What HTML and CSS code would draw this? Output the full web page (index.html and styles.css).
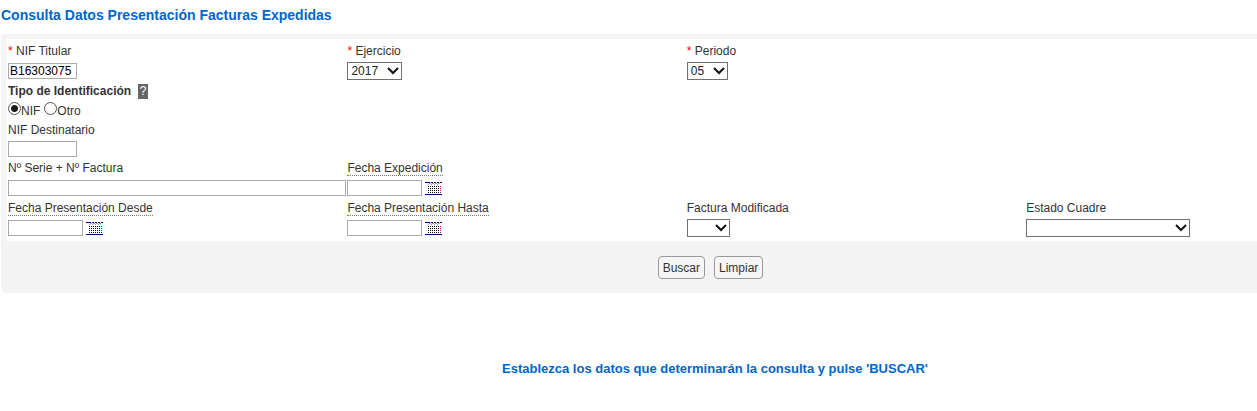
FILE: index.html
```html
<!DOCTYPE html>
<html lang="es">
  <head>
    <meta charset="UTF-8" />
    <meta name="viewport" content="width=device-width, initial-scale=1.0" />
    <title>Consulta Datos Presentación Facturas Expedidas</title>
    <link rel="stylesheet" href="styles.css">
  </head>

  <body>
    <svg class="defs" width="0" height="0">
      <symbol id="calendar" viewBox="0 0 17 13" shape-rendering="crispEdges">
        <path d="M0 .5h5M6 .5h2M9 .5h2M12 .5h2M15 .5h2M0 12.5h17" stroke="#000060" />
        <path d="M4 1.5h2M7 1.5h2M10 1.5h2M13 1.5h2M3 2.5h1M6 2.5h1M9 2.5h1M12 2.5h1" stroke="#a0a0a0" />
        <path d="M3 4.5h12M3 6.5h12M3 8.5h12M3 10.5h12" stroke="#000" stroke-dasharray="1 1" />
        <path d="M15.500 4v8" stroke="#d00040" stroke-dasharray="1 1" />
      </symbol>
    </svg>
    <div class="page">
      <h1>Consulta Datos Presentación Facturas Expedidas</h1>
      <form class="panel">
        <div class="fields">
          <div class="row">
            <div class="field">
              <label for="titular"><span class="required">*</span> NIF Titular</label>
              <div class="control"><input id="titular" class="nif" type="text" value="B16303075" /></div>
            </div>
            <div class="field">
              <label for="ejercicio"><span class="required">*</span> Ejercicio</label>
              <div class="control"><select id="ejercicio" class="year"><option>2017</option></select></div>
            </div>
            <div class="field">
              <label for="periodo"><span class="required">*</span> Periodo</label>
              <div class="control"><select id="periodo" class="period"><option>05</option></select></div>
            </div>
          </div>
          <div class="row" role="radiogroup" aria-labelledby="tipo">
            <div class="field">
              <div class="legend"><strong id="tipo">Tipo de Identificación</strong><button type="button" class="help">?</button></div>
              <div class="control radios">
                <input id="tipo-nif" type="radio" name="tipo" checked /><label for="tipo-nif">NIF</label>
                <input id="tipo-otro" type="radio" name="tipo" /><label for="tipo-otro">Otro</label>
              </div>
            </div>
          </div>
          <div class="row">
            <div class="field">
              <label for="destinatario">NIF Destinatario</label>
              <div class="control short"><input id="destinatario" class="nif" type="text" /></div>
            </div>
          </div>
          <div class="row">
            <div class="field">
              <label for="factura">Nº Serie + Nº Factura</label>
              <div class="control"><input id="factura" class="wide" type="text" /></div>
            </div>
            <div class="field">
              <label for="expedicion"><abbr title="dd-mm-aaaa">Fecha Expedición</abbr></label>
              <div class="control"><input id="expedicion" class="date" type="text" /><button type="button" class="picker" aria-label="Calendario"><svg><use href="#calendar" /></svg></button></div>
            </div>
          </div>
          <div class="row">
            <div class="field">
              <label for="desde"><abbr title="dd-mm-aaaa">Fecha Presentación Desde</abbr></label>
              <div class="control"><input id="desde" class="date" type="text" /><button type="button" class="picker" aria-label="Calendario"><svg><use href="#calendar" /></svg></button></div>
            </div>
            <div class="field">
              <label for="hasta"><abbr title="dd-mm-aaaa">Fecha Presentación Hasta</abbr></label>
              <div class="control"><input id="hasta" class="date" type="text" /><button type="button" class="picker" aria-label="Calendario"><svg><use href="#calendar" /></svg></button></div>
            </div>
            <div class="field">
              <label for="modificada">Factura Modificada</label>
              <div class="control"><select id="modificada" class="modified"><option></option></select></div>
            </div>
            <div class="field">
              <label for="estado">Estado Cuadre</label>
              <div class="control"><select id="estado" class="state"><option></option></select></div>
            </div>
          </div>
        </div>
        <div class="actions">
          <button type="submit">Buscar</button>
          <button type="reset">Limpiar</button>
        </div>
      </form>
      <p class="message">Establezca los datos que determinarán la consulta y pulse 'BUSCAR'</p>
    </div>
  </body>
</html>
```

FILE: styles.css
```css
* {
  box-sizing: border-box;
}

html {
  overflow: hidden;
}

body {
  margin: 0;
  background: #fff;
  color: #333;
  font: 12px/20px "Liberation Sans", Arial, sans-serif;
}

.defs {
  position: absolute;
}

/* four columns of 27% make the form wider than the window */
.page {
  width: 114%;
  padding: 5px 4px 0 1px;
}

h1 {
  margin: 0 0 9px;
  font-size: 14px;
  line-height: 20px;
  color: #0066cc;
}

.panel {
  padding: 5px 5px 0;
  background: #f4f4f4;
  border-radius: 4px;
}

.fields {
  padding: 2px 2px 3px;
  background: #fff;
}

.row {
  display: grid;
  grid-template-columns: repeat(4, 27vw);
}

label,
.legend {
  display: block;
}

.required {
  color: #f00;
}

abbr {
  display: inline-block;
  line-height: 14px;
  text-decoration: none;
  border-bottom: 1px dotted #777;
}

.control {
  display: flex;
  align-items: center;
  height: 20px;
}

.control.short {
  height: 18px;
}

input,
select,
button {
  font: inherit;
}

input[type="text"] {
  height: 16px;
  padding: 0 1px;
  border: 1px solid #ababab;
  border-radius: 0;
  background: #fff;
  color: #000;
  line-height: 14px;
}

input.nif {
  width: 69px;
}

input.date {
  width: 75px;
}

input.wide {
  width: calc(100% - 1px);
}

select {
  appearance: none;
  height: 18px;
  padding: 0 16px 0 3px;
  border: 1px solid #707070;
  border-radius: 0;
  background: #fff url("data:image/svg+xml,%3Csvg xmlns='http://www.w3.org/2000/svg' width='12' height='8'%3E%3Cpath d='M1 1l5 5 5-5' fill='none' stroke='%23111' stroke-width='2'/%3E%3C/svg%3E") no-repeat right 2px center;
  color: #222;
  line-height: 16px;
}

.year {
  width: 55px;
}

.period {
  width: 41px;
}

.modified {
  width: 43px;
}

.state {
  width: 164px;
}

.legend {
  display: flex;
  align-items: center;
  gap: 7px;
}

.help {
  width: 10px;
  height: 15px;
  padding: 0;
  border: 0;
  background: #666;
  color: #fff;
  line-height: 15px;
}

.radios {
  height: 19px;
}

.radios input {
  appearance: none;
  width: 13px;
  height: 13px;
  margin: 0 0 4px;
  border: 1px solid #555;
  border-radius: 50%;
  background: #fff;
}

.radios input:checked {
  background: radial-gradient(circle, #1a1a1a 3px, #fff 4px);
}

.radios label {
  margin-right: 4px;
}

.picker {
  display: flex;
  margin-left: 3px;
  padding: 0;
  border: 0;
  background: none;
}

.picker svg {
  width: 17px;
  height: 13px;
}

.actions {
  display: flex;
  justify-content: center;
  padding: 15px 0 14px;
}

.actions button {
  height: 23px;
  margin-right: 9px;
  padding: 0 4px;
  border: 1px solid #999;
  border-radius: 4px;
  background: #f6f6f6;
  color: #333;
}

.message {
  margin: 66px 0 0;
  color: #0066cc;
  font-size: 13px;
  font-weight: bold;
  text-align: center;
}
```
